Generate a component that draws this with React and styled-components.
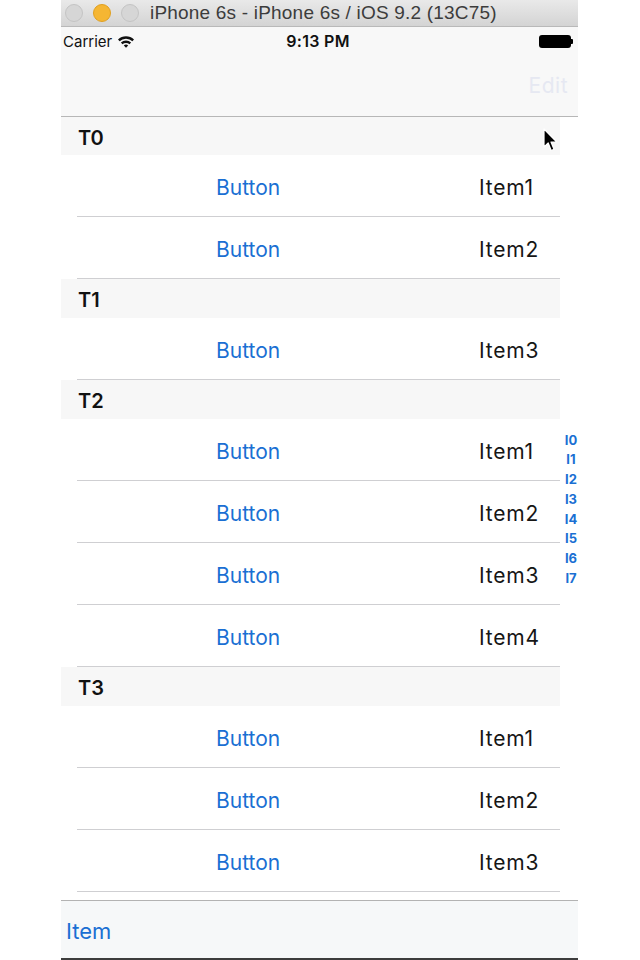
import React from "react";
import styled, { createGlobalStyle } from "styled-components";

const Global = createGlobalStyle`
  html, body { margin: 0; padding: 0; background: #ffffff; }
  body { font-family: "Inter", "Liberation Sans", sans-serif; }
  * { box-sizing: border-box; }
`;

const Win = styled.div`
  position: relative;
  width: 517px;
  height: 960px;
  margin-left: 61px;
  display: flex;
  flex-direction: column;
  overflow: hidden;
`;

const TitleBar = styled.div`
  height: 27px;
  flex: none;
  display: flex;
  align-items: center;
  gap: 10px;
  padding-left: 4px;
  background: linear-gradient(#e9e9e9, #d4d4d4);
  border-bottom: 1px solid #b9b9b9;
`;

const Light = styled.span`
  width: 18px;
  height: 18px;
  border-radius: 50%;
  background: ${(p) => p.$c};
  border: 1px solid ${(p) => p.$b};
`;

const Title = styled.span`
  margin-left: 1px;
  font-family: "Liberation Sans", sans-serif;
  font-size: 19px;
  color: #3c3c3c;
  letter-spacing: 0.2px;
`;

const Top = styled.div`
  flex: none;
  height: 90px;
  background: #f8f8f8;
  border-bottom: 1px solid #b7b7b7;
  display: flex;
  flex-direction: column;
`;

const StatusBar = styled.div`
  height: 26px;
  display: grid;
  grid-template-columns: 1fr auto 1fr;
  align-items: center;
  padding: 2px 5px 0 2px;
  font-size: 15px;
  color: #111;
`;

const Carrier = styled.div`
  display: flex;
  align-items: center;
  gap: 5px;
`;

const Clock = styled.div`
  font-weight: 600;
  font-size: 16px;
  letter-spacing: 0.3px;
`;

const BatteryWrap = styled.div`
  justify-self: end;
  display: flex;
  align-items: center;
`;

const Battery = styled.span`
  width: 32px;
  height: 13px;
  border-radius: 3px;
  background: #000;
`;

const Nub = styled.span`
  width: 2px;
  height: 5px;
  background: #000;
  border-radius: 0 1px 1px 0;
`;

const NavBar = styled.div`
  flex: 1;
  display: flex;
  align-items: center;
  justify-content: flex-end;
  padding-right: 10px;
  padding-top: 2px;
`;

const EditBtn = styled.span`
  font-size: 21px;
  letter-spacing: 0.5px;
  color: #e6e8f2;
`;

const Body = styled.div`
  flex: 1;
  display: flex;
  overflow: hidden;
  min-height: 0;
`;

const List = styled.div`
  width: 499px;
  flex: none;
  display: flex;
  flex-direction: column;
`;

const SectionHeader = styled.div`
  flex: none;
  height: ${(p) => (p.$first ? 38 : 39)}px;
  background: #f7f7f7;
  display: flex;
  align-items: center;
  padding: 3px 0 0 17px;
  font-size: 20px;
  font-weight: 600;
  color: #111;
`;

const Row = styled.div`
  flex: none;
  height: 62px;
  margin-left: 16px;
  padding-top: 3px;
  display: flex;
  align-items: center;
  border-bottom: 1px solid #cfcfd2;
`;

const RowBtn = styled.span`
  margin-left: 139px;
  font-size: 21px;
  letter-spacing: 0px;
  color: #1a6fd3;
`;

const RowLabel = styled.span`
  margin-left: auto;
  width: 81px;
  text-align: left;
  font-size: 21px;
  letter-spacing: 0.8px;
  color: #161616;
`;

const Index = styled.div`
  flex: 1;
  display: flex;
  flex-direction: column;
  justify-content: center;
  align-items: center;
  padding-top: 2px;
`;

const IndexItem = styled.span`
  height: 19.7px;
  line-height: 19.7px;
  font-size: 13px;
  font-weight: 700;
  color: #1a6fd3;
  padding-left: 4px;
`;

const TabBar = styled.div`
  flex: none;
  height: 60px;
  background: #f6f8f9;
  border-top: 1px solid #b3b3b3;
  border-bottom: 2px solid #3d3d3d;
  display: flex;
  align-items: center;
  padding: 3px 0 0 5px;
`;

const TabItem = styled.span`
  font-size: 22px;
  color: #1a6fd3;
`;

const Cursor = styled.svg`
  position: absolute;
  left: 482px;
  top: 128px;
`;

const sections = [
  { t: "T0", items: ["Item1", "Item2"] },
  { t: "T1", items: ["Item3"] },
  { t: "T2", items: ["Item1", "Item2", "Item3", "Item4"] },
  { t: "T3", items: ["Item1", "Item2", "Item3"] },
];

const Wifi = () => (
  <svg width="18" height="13" viewBox="0 0 18 13">
    <path d="M1 4.6 A11.5 11.5 0 0 1 17 4.6 L15.4 6.3 A9.2 9.2 0 0 0 2.6 6.3 Z" fill="#111" />
    <path d="M3.9 7.6 A7.4 7.4 0 0 1 14.1 7.6 L12.5 9.3 A5.1 5.1 0 0 0 5.5 9.3 Z" fill="#111" />
    <path d="M6.8 10.6 A3.2 3.2 0 0 1 11.2 10.6 L9 12.8 Z" fill="#111" />
  </svg>
);

export default function App() {
  return (
    <>
      <Global />
      <Win>
        <TitleBar>
          <Light $c="#d6d6d6" $b="#c4c4c4" />
          <Light $c="#f5b633" $b="#e0a020" />
          <Light $c="#d6d6d6" $b="#c4c4c4" />
          <Title>iPhone 6s - iPhone 6s / iOS 9.2 (13C75)</Title>
        </TitleBar>
        <Top>
          <StatusBar>
            <Carrier>
              Carrier <Wifi />
            </Carrier>
            <Clock>9:13 PM</Clock>
            <BatteryWrap>
              <Battery />
              <Nub />
            </BatteryWrap>
          </StatusBar>
          <NavBar>
            <EditBtn>Edit</EditBtn>
          </NavBar>
        </Top>
        <Body>
          <List>
            {sections.map((s, si) => (
              <React.Fragment key={s.t}>
                <SectionHeader $first={si === 0}>{s.t}</SectionHeader>
                {s.items.map((it, i) => (
                  <Row key={i}>
                    <RowBtn>Button</RowBtn>
                    <RowLabel>{it}</RowLabel>
                  </Row>
                ))}
              </React.Fragment>
            ))}
          </List>
          <Index>
            {["I0", "I1", "I2", "I3", "I4", "I5", "I6", "I7"].map((x) => (
              <IndexItem key={x}>{x}</IndexItem>
            ))}
          </Index>
        </Body>
        <TabBar>
          <TabItem>Item</TabItem>
        </TabBar>
        <Cursor width="16" height="26" viewBox="0 0 16 26">
          <path d="M1 1 L1 19 L5.2 15 L8.2 22.5 L11 21.3 L8 14 L13.8 14 Z" fill="#000" stroke="#fff" strokeWidth="1.2" strokeLinejoin="round" />
        </Cursor>
      </Win>
    </>
  );
}
